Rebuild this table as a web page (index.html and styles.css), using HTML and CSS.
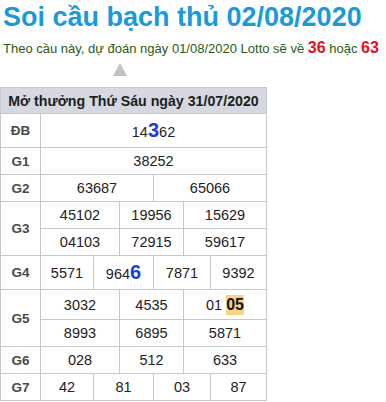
FILE: index.html
```html
<!DOCTYPE html>
<html lang="vi">
<head>
<meta charset="utf-8">
<link rel="stylesheet" href="styles.css">
</head>
<body>
<h1 class="title">Soi cầu bạch thủ 02/08/2020</h1>
<p class="sub">Theo cầu này, dự đoán ngày 01/08/2020 Lotto sẽ về <b class="red">36</b> hoặc <b class="red">63</b></p>
<div class="arrow-wrap"><span class="arrow"></span></div>
<table class="kq">
<colgroup>
<col class="c0"><col class="c1"><col class="c2"><col class="c3"><col class="c4"><col class="c5"><col class="c6">
</colgroup>
<thead>
<tr><th colspan="7" class="head">Mở thưởng Thứ Sáu ngày 31/07/2020</th></tr>
</thead>
<tbody>
<tr class="tall"><td class="lbl">ĐB</td><td colspan="6">14<b class="blue">3</b>62</td></tr>
<tr><td class="lbl">G1</td><td colspan="6">38252</td></tr>
<tr><td class="lbl">G2</td><td colspan="3">63687</td><td colspan="3">65066</td></tr>
<tr><td class="lbl" rowspan="2">G3</td><td colspan="2">45102</td><td colspan="2">19956</td><td colspan="2">15629</td></tr>
<tr><td colspan="2">04103</td><td colspan="2">72915</td><td colspan="2">59617</td></tr>
<tr class="tall"><td class="lbl">G4</td><td>5571</td><td colspan="2">964<b class="blue">6</b></td><td colspan="2">7871</td><td>9392</td></tr>
<tr class="g5a"><td class="lbl" rowspan="2">G5</td><td colspan="2">3032</td><td colspan="2">4535</td><td colspan="2">01 <b class="hl">05</b></td></tr>
<tr><td colspan="2">8993</td><td colspan="2">6895</td><td colspan="2">5871</td></tr>
<tr><td class="lbl">G6</td><td colspan="2">028</td><td colspan="2">512</td><td colspan="2">633</td></tr>
<tr><td class="lbl">G7</td><td>42</td><td colspan="2">81</td><td colspan="2">03</td><td>87</td></tr>
</tbody>
</table>
</body>
</html>
```
FILE: styles.css
```css
html, body {
  margin: 0;
  padding: 0;
  background: #ffffff;
  font-family: "Liberation Sans", Arial, sans-serif;
}
.title {
  margin: 0;
  padding: 2px 0 0 3px;
  font-size: 27px;
  line-height: 31px;
  font-weight: bold;
  color: #1b9ad8;
  white-space: nowrap;
}
.sub {
  margin: 0;
  padding: 6px 0 0 3px;
  font-size: 13px;
  line-height: 18px;
  color: #2d5a14;
  white-space: nowrap;
}
.red {
  color: #e0121b;
  font-size: 16px;
}
.arrow-wrap {
  height: 29px;
  padding-left: 113px;
  padding-top: 5px;
  box-sizing: border-box;
}
.arrow {
  display: block;
  width: 0;
  height: 0;
  border-left: 7.5px solid transparent;
  border-right: 7.5px solid transparent;
  border-bottom: 13px solid #c3c3c3;
}
.kq {
  border-collapse: collapse;
  table-layout: fixed;
  width: 266px;
  font-size: 14.5px;
  color: #222;
}
.c0 { width: 40px; }
.c1 { width: 53px; }
.c2 { width: 26px; }
.c3 { width: 34px; }
.c4 { width: 30px; }
.c5 { width: 27px; }
.c6 { width: 56px; }
.kq th, .kq td {
  border: 1px solid #c8c8cc;
  text-align: center;
  padding: 0;
  height: 26px;
}
.kq .head {
  background: #d5d8e1;
  font-weight: bold;
  font-size: 14.2px;
  color: #1e1e1e;
  height: 25px;
}
.kq tr.tall td {
  height: 33px;
}
.kq tr.g5a td {
  height: 29px;
}
.kq .lbl {
  font-weight: bold;
  font-size: 13.5px;
  color: #4a4a4a;
}
.blue {
  color: #1b3fd6;
  font-size: 20px;
}
.hl {
  background: #f8d480;
  color: #111;
  font-size: 16px;
  padding: 1px 0 2px;
}
```
